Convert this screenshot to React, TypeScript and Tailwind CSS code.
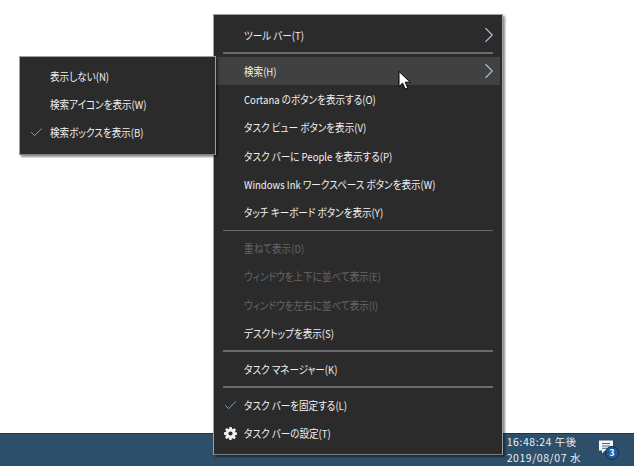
import { ChevronRight, Check } from 'lucide-react'

const FONT = "font-['Noto_Sans_CJK_JP','Noto_Sans',sans-serif]"

function Row({ label, disabled, hot, arrow, icon }: { label: string; disabled?: boolean; hot?: boolean; arrow?: boolean; icon?: React.ReactNode }) {
  return (
    <div className={`flex h-[28.25px] items-center ${hot ? 'bg-[#414141]' : ''}`}>
      <div className="flex w-[28px] shrink-0 items-center justify-center">{icon}</div>
      <span className={`flex-1 origin-left scale-x-[0.87] whitespace-nowrap text-[11px] [font-feature-settings:'palt'] ${disabled ? 'text-[#666666]' : 'text-[#f0f0f0]'}`}>{label}</span>
      {arrow && <ChevronRight size={26} strokeWidth={1} className="-mr-[2px] text-[#a9c0d6]" />}
    </div>
  )
}

function Sep() {
  return (
    <div className="px-[7px] py-[3px]">
      <div className="h-[1.75px] bg-[#6a6a6a]" />
    </div>
  )
}

const tick = <Check size={15} strokeWidth={1.3} className="text-[#8fc0ec]" />

const gear = (
  <svg width="13" height="13" viewBox="0 0 16 16">
    <path
      fillRule="evenodd"
      fill="#f0f0f0"
      d="M6.6 0h2.8l.4 2.2 1.1.5L12.8 1.4l2 2-1.3 1.9.5 1.1 2 .4v2.8l-2.2.4-.5 1.1 1.3 1.9-2 2-1.9-1.3-1.1.5-.4 2H6.6l-.4-2.2-1.1-.5-1.9 1.3-2-2 1.3-1.9-.5-1.1-2-.4V6.6l2.2-.4.5-1.1-1.3-1.9 2-2 1.9 1.3 1.1-.5zM8 5.4a2.6 2.6 0 1 0 0 5.2 2.6 2.6 0 0 0 0-5.2z"
    />
  </svg>
)

export default function App() {
  return (
    <div className={`relative flex h-[466px] w-[634px] flex-col justify-end overflow-hidden bg-white ${FONT}`}>
      {/* taskbar */}
      <div className="flex h-[33px] items-center justify-end border-t border-[#1f3547] bg-[#2e4f69] pr-[16px]">
        <div className="mr-[17px] text-[10.5px] leading-[16.5px] tracking-[0.55px] text-[#e8eef3]">
          <div>16:48:24 午後</div>
          <div>2019/08/07 水</div>
        </div>
        <div className="relative h-[20px] w-[20px]">
          <svg width="16" height="14" viewBox="0 0 16 14" className="absolute left-0 top-0">
            <path d="M1 0.5h14v10H7l-3 3v-3H1z" fill="#f5f7f9" />
            <path d="M4 3.5h8M4 6h8M4 8.3h8" stroke="#4a6378" strokeWidth="1" />
          </svg>
          <div className="absolute left-[7px] top-[6px] flex h-[14px] w-[14px] items-center justify-center rounded-full border border-[#0d2c4a] bg-[#1c5c9c] text-[9px] font-bold text-white">3</div>
        </div>
      </div>

      {/* main context menu */}
      <div className="absolute left-[213px] top-[14px] w-[290px] border border-[#a0a0a0] border-b-[#7f7f7f] bg-[#2b2b2b] px-[2px] py-[6px] shadow-[2px_2px_2px_rgba(0,0,0,0.45)]">
        <Row label="ツール バー(T)" arrow />
        <Sep />
        <Row label="検索(H)" hot arrow />
        <Row label="Cortana のボタンを表示する(O)" />
        <Row label="タスク ビュー ボタンを表示(V)" />
        <Row label="タスク バーに People を表示する(P)" />
        <Row label="Windows Ink ワークスペース ボタンを表示(W)" />
        <Row label="タッチ キーボード ボタンを表示(Y)" />
        <Sep />
        <Row label="重ねて表示(D)" disabled />
        <Row label="ウィンドウを上下に並べて表示(E)" disabled />
        <Row label="ウィンドウを左右に並べて表示(I)" disabled />
        <Row label="デスクトップを表示(S)" />
        <Sep />
        <Row label="タスク マネージャー(K)" />
        <Sep />
        <Row label="タスク バーを固定する(L)" icon={tick} />
        <Row label="タスク バーの設定(T)" icon={gear} />
      </div>

      {/* search submenu */}
      <div className="absolute left-[19px] top-[56px] w-[197px] border border-[#a0a0a0] border-b-[#7f7f7f] bg-[#2b2b2b] px-[2px] pb-[7px] pt-[5px] shadow-[2px_2px_2px_rgba(0,0,0,0.45)]">
        <Row label="表示しない(N)" />
        <Row label="検索アイコンを表示(W)" />
        <Row label="検索ボックスを表示(B)" icon={tick} />
      </div>

      {/* cursor */}
      <svg width="14" height="20" viewBox="0 0 14 20" className="absolute left-[398px] top-[71px]">
        <path d="M1 0.5v15l3.6-3.4 2.6 6 2.6-1.1-2.6-5.8h5z" fill="#fff" stroke="#000" strokeWidth="1" />
      </svg>
    </div>
  )
}
